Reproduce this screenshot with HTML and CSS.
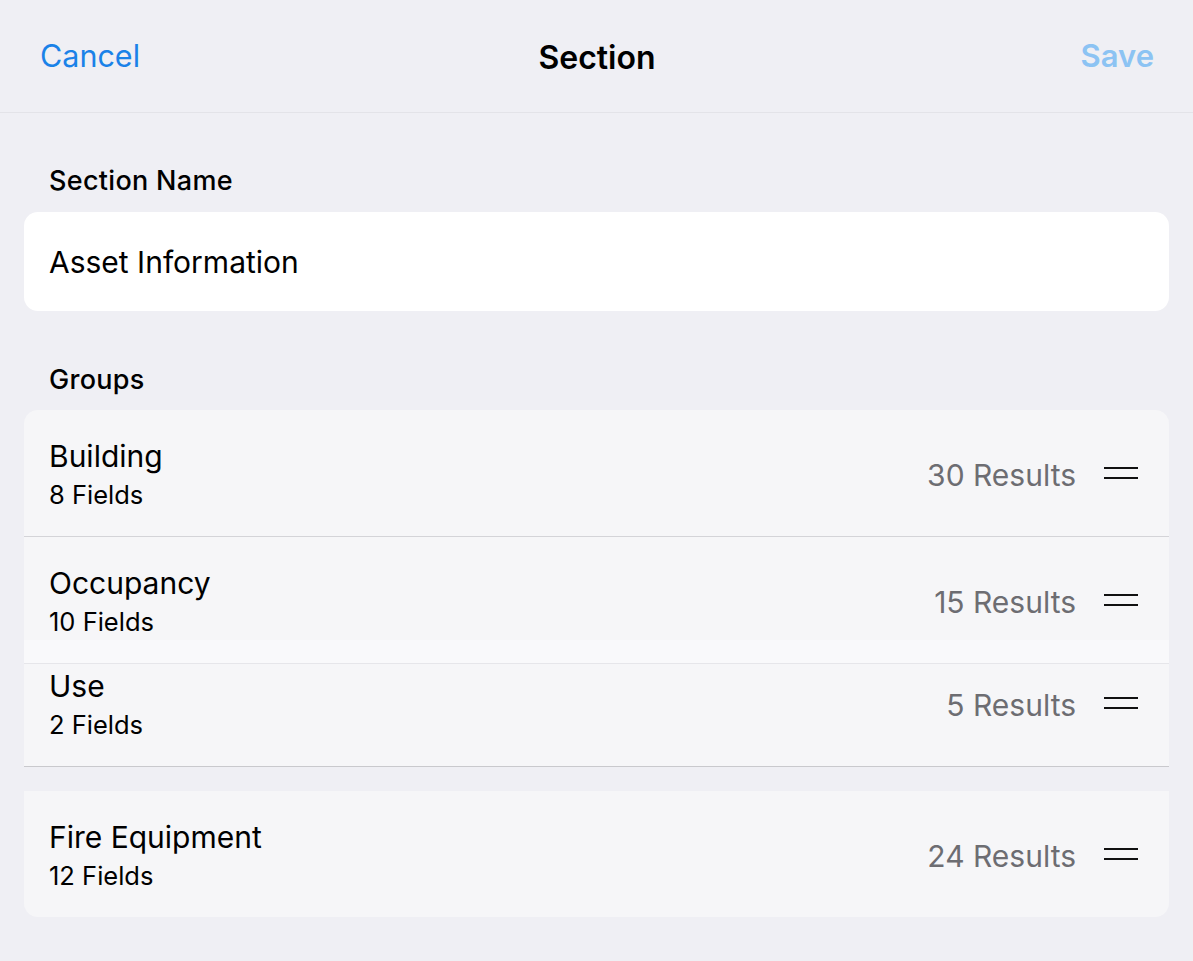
FILE: index.html
```html
<!DOCTYPE html>
<html lang="en">
<head>
<meta charset="utf-8">
<title>Section</title>
<link rel="stylesheet" href="styles.css">
</head>
<body>
<header class="navbar">
  <div class="nav-left"><span class="nav-btn cancel">Cancel</span></div>
  <div class="nav-title">Section</div>
  <div class="nav-right"><span class="nav-btn save">Save</span></div>
</header>
<main class="content">
  <div class="label label-first">Section Name</div>
  <div class="input-card">Asset Information</div>

  <div class="label label-groups">Groups</div>
  <div class="groups">
    <div class="row row-first">
      <div class="texts"><div class="title">Building</div><div class="sub">8 Fields</div></div>
      <div class="meta"><span class="results">30 Results</span><span class="handle"><i></i><i></i></span></div>
    </div>
    <div class="row row-strip">
      <div class="texts"><div class="title">Occupancy</div><div class="sub">10 Fields</div></div>
      <div class="meta"><span class="results">15 Results</span><span class="handle"><i></i><i></i></span></div>
    </div>
    <div class="row row-lifted">
      <div class="texts"><div class="title">Use</div><div class="sub">2 Fields</div></div>
      <div class="meta"><span class="results">5 Results</span><span class="handle"><i></i><i></i></span></div>
    </div>
    <div class="row row-last">
      <div class="texts"><div class="title">Fire Equipment</div><div class="sub">12 Fields</div></div>
      <div class="meta"><span class="results">24 Results</span><span class="handle"><i></i><i></i></span></div>
    </div>
  </div>
</main>
</body>
</html>
```
FILE: styles.css
```css
* { box-sizing: border-box; }
html, body { margin: 0; padding: 0; }
body {
  background: #efeff4;
  font-family: Inter, "Noto Sans", "Liberation Sans", sans-serif;
  color: #000;
  width: 1193px;
  min-height: 961px;
}
.navbar {
  height: 113px;
  border-bottom: 1px solid #e3e3e8;
  display: grid;
  grid-template-columns: 1fr auto 1fr;
  align-items: center;
  padding: 0 39px 2px 40px;
}
.nav-left { justify-self: start; }
.nav-right { justify-self: end; }
.nav-btn { font-size: 30px; }
.cancel { color: #1a82e8; font-size: 30.5px; }
.save { color: #8cc3f3; font-weight: 600; font-size: 31px; }
.nav-title { font-size: 32px; font-weight: 600; padding-top: 4px; }

.content { padding: 0 24px; }
.label {
  font-size: 27px;
  font-weight: 500;
  letter-spacing: 0.3px;
  padding-left: 25px;
  line-height: 30px;
}
.label-first { margin-top: 53px; margin-bottom: 16px; }
.label-groups { margin-top: 54px; margin-bottom: 15px; }
.input-card {
  background: #fff;
  border-radius: 14px;
  height: 99px;
  display: flex;
  align-items: center;
  padding-left: 25px;
  font-size: 30px;
}

.groups { display: flex; flex-direction: column; }
.row {
  display: flex;
  align-items: center;
  justify-content: space-between;
  height: 127px;
  padding: 3px 31px 0 25px;
  background: #f6f6f8;
  border-bottom: 1px solid #d4d4d8;
}
.row-first { border-radius: 14px 14px 0 0; }
.row-strip {
  background: linear-gradient(#f6f6f8 0, #f6f6f8 103px, #f9f9fb 103px);
  border-bottom-color: #e6e6ea;
}
.row-lifted {
  height: 103px;
  padding-top: 0;
  padding-bottom: 21px;
  border-bottom-color: #c9c9cd;
}
.row-last {
  margin-top: 24px;
  height: 126px;
  border-bottom: none;
  border-radius: 0 0 14px 14px;
}
.texts { display: flex; flex-direction: column; }
.title { font-size: 30px; line-height: 34px; }
.sub { font-size: 25.5px; line-height: 30px; margin-top: 7px; }
.meta { display: flex; align-items: center; }
.results { font-size: 30px; color: #6d6d72; margin-right: 28px; }
.handle { display: flex; flex-direction: column; gap: 8px; width: 34px; margin-top: -3px; }
.handle i { display: block; height: 2px; background: #111; }
```
